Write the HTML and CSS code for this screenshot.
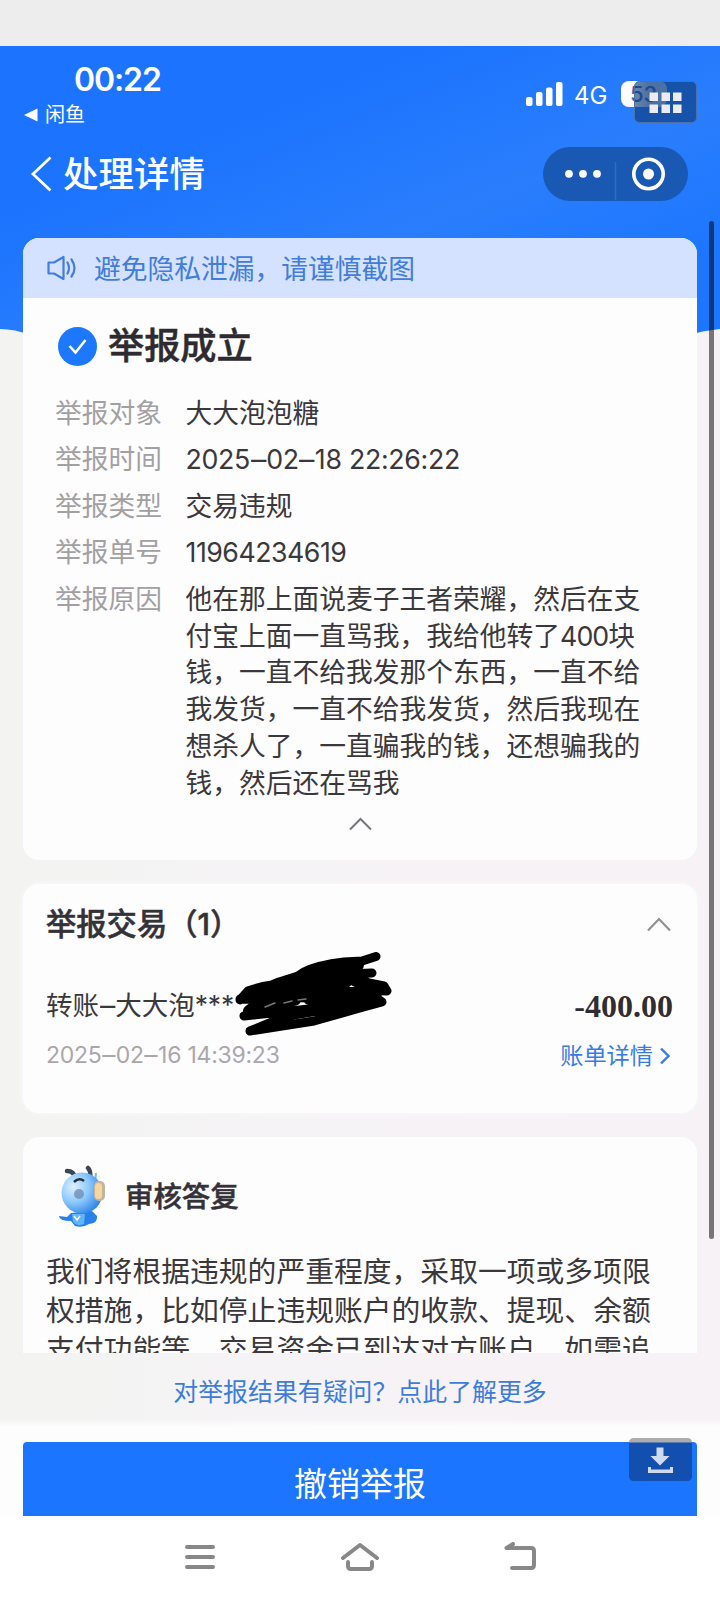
FILE: index.html
```
<!DOCTYPE html>
<html lang="zh-CN">
<head>
<meta charset="utf-8">
<title>处理详情</title>
<link rel="stylesheet" href="styles.css">
</head>
<body>
<div class="phone">
  <div class="strip"></div>
  <main class="screen">
    <svg class="backdrop" width="720" height="290" viewBox="0 0 720 290"><defs><linearGradient id="sky" x1="0" y1="0" x2="1" y2="1"><stop offset="0.3" stop-color="#1c74fe"/><stop offset="0.6" stop-color="#2a7efd"/><stop offset="0.85" stop-color="#1c76ff"/></linearGradient></defs><path d="M0 0H720V283Q700 285 690 289H30Q15 283 0 283Z" fill="url(#sky)"/></svg>
    <header class="top">
      <div class="status">
        <div class="left">
          <div class="time">00:22</div>
          <div class="return"><svg width="14" height="14" viewBox="0 0 14 14"><path d="M0 7L13.5 0.5V13.5Z" fill="#fff"/></svg><span>闲鱼</span></div>
        </div>
        <svg class="signal" width="37" height="24" viewBox="0 0 37 24" fill="#fff"><rect y="15" width="6.5" height="9" rx="2"/><rect x="10" y="10" width="6.5" height="14" rx="2"/><rect x="20" y="5.500" width="6.500" height="18.500" rx="2"/><rect x="30" y="0" width="6.500" height="24" rx="2"/></svg>
        <span class="net">4G</span>
        <div class="battery"><span>53</span></div>
      </div>
      <div class="nav">
        <svg class="back" width="22" height="36" viewBox="0 0 22 36"><path d="M20.500 1.500L3 18L20.500 34.500" fill="none" stroke="#fff" stroke-width="2.800"/></svg>
        <h1>处理详情</h1>
        <svg class="capsule" width="145" height="54" viewBox="0 0 145 54"><rect width="145" height="54" rx="27" fill="#1959b3"/><path d="M72.500 15V53" stroke="#2d6cc7" stroke-width="1.500"/><g fill="#fff"><circle cx="26" cy="26.800" r="3.900"/><circle cx="40" cy="26.800" r="3.900"/><circle cx="54" cy="26.800" r="3.900"/><circle cx="105.500" cy="27" r="5.500"/></g><circle cx="105.500" cy="27" r="14.700" fill="none" stroke="#fff" stroke-width="3.600"/></svg>
      </div>
    </header>

    <section class="card report">
      <div class="notice">
        <svg width="30" height="26" viewBox="0 0 30 26" fill="none" stroke="#3f7de0" stroke-width="2.200" stroke-linejoin="round" stroke-linecap="round"><path d="M1.500 7.500H7L16.500 2V24L7 18.500H1.500Z"/><path d="M20.500 7.500Q23.500 13 20.500 18.500M24.500 4.500Q30.500 13 24.500 21.500"/></svg>
        <span>避免隐私泄漏，请谨慎截图</span>
      </div>
      <div class="result">
        <svg width="39" height="39" viewBox="0 0 39 39"><circle cx="19.500" cy="19.500" r="19.500" fill="#1c79fd"/><path d="M11.500 19L17.500 25.500L27.500 13" fill="none" stroke="#fff" stroke-width="2.500"/></svg>
        <h2>举报成立</h2>
      </div>
      <dl class="facts">
        <dt>举报对象</dt><dd>大大泡泡糖</dd>
        <dt>举报时间</dt><dd class="when">2025<i>–</i>02<i>–</i>18 22:26:22</dd>
        <dt>举报类型</dt><dd>交易违规</dd>
        <dt>举报单号</dt><dd class="serial">11964234619</dd>
        <dt>举报原因</dt><dd>他在那上面说麦子王者荣耀，然后在支<br>付宝上面一直骂我，我给他转了<span class="sum">400</span>块<br>钱，一直不给我发那个东西，一直不给<br>我发货，一直不给我发货，然后我现在<br>想杀人了，一直骗我的钱，还想骗我的<br>钱，然后还在骂我</dd>
      </dl>
      <svg class="fold" width="24" height="14" viewBox="0 0 24 14"><path d="M2 12.500L12.500 2L23 12.500" fill="none" stroke="#777579" stroke-width="2"/></svg>
    </section>

    <section class="card trade">
      <div class="trade-head">
        <h3>举报交易（1）</h3>
        <svg width="26" height="15" viewBox="0 0 26 15"><path d="M2 13.500L13 2L24 13.500" fill="none" stroke="#929094" stroke-width="2.200"/></svg>
      </div>
      <div class="trade-row">
        <span class="payee">转账<i>–</i>大大泡<span class="mask">***</span></span><span class="amount">-400.00</span>
        <svg class="scribble" width="160" height="88" viewBox="0 -1 160 88" fill="none" stroke="#000" stroke-width="9" stroke-linecap="round" stroke-linejoin="round"><path d="M6 47L14 38Q24 34 38 32L45 29L64 23L70 19Q84 12 110 9L128 8L142 3.500M138 20L113 21L135 30L150 33L153 38L131 37L148 49L126 55L80 68L16 78L45 66L84 55L10 63L26 57L62 48L6 46"/><path d="M14 43L42 34L70 25L112 13L124 12L110 22L132 33L145 37L126 48L85 58L90 44L60 43L23 52L15 58M48 36L112 29L72 36L136 41L75 46M80 23L112 18M25 45L75 37M88 50L120 44M44 63L124 50" stroke-width="12"/><path d="M31 54L41 50M50 50L58 48M64 47L72 46" stroke="#77747a" stroke-width="1.500"/></svg>
      </div>
      <div class="trade-foot"><span class="date">2025<i>–</i>02<i>–</i>16 14:39:23</span><span class="bill">账单详情<svg width="12" height="18" viewBox="0 0 12 18"><path d="M2 1.500L9.500 9L2 16.500" fill="none" stroke="#377ce6" stroke-width="2.400"/></svg></span></div>
    </section>

    <section class="card reply">
      <div class="reply-head">
        <svg width="50" height="64" viewBox="0 0 50 64"><defs><radialGradient id="face" cx=".3" cy=".35" r=".75"><stop offset="0" stop-color="#dcf0ff"/><stop offset=".5" stop-color="#8ccafc"/><stop offset="1" stop-color="#2c81e8"/></radialGradient></defs><path d="M38 18L39 8" stroke="#75b7f3" stroke-width="2"/><path d="M18 13Q17 6 10 6M33 13Q34 6 31 3" fill="none" stroke="#3b4655" stroke-width="4.500" stroke-linecap="round"/><path d="M14 48L10 52L2 51Q2 56 14 56L18 61Q26 63 32 59Q41 58 40 51L35 46Z" fill="#2781e8"/><path d="M15 49H28L27 59Q20 62 16 57Z" fill="#61b5fb"/><circle cx="25" cy="28" r="20.500" fill="url(#face)"/><rect x="37" y="16" width="11" height="20" rx="5" fill="#c0b5a3"/><rect x="38" y="18" width="7" height="16" rx="3.500" fill="#f9d59b"/><path d="M17 17Q22 12 27 16" fill="none" stroke="#202e45" stroke-width="2.500"/><circle cx="22" cy="29" r="5" fill="#718fb5" opacity=".8"/><path d="M17 51L20 55L23 51" fill="none" stroke="#fff" stroke-width="1.500"/></svg>
        <h3>审核答复</h3>
      </div>
      <p>我们将根据违规的严重程度，采取一项或多项限<br>权措施，比如停止违规账户的收款、提现、余额<br>支付功能等，交易资金已到达对方账户，如需追</p>
    </section>
    <div class="more">对举报结果有疑问？点此了解更多</div>
    <footer class="action"><div class="revoke">撤销举报</div></footer>
  </main>
  <nav class="system">
    <svg width="30" height="26" viewBox="0 0 30 26" stroke="#888" stroke-width="4" stroke-linecap="round"><path d="M2 3H28M2 13H28M2 23H28"/></svg>
    <svg width="38" height="30" viewBox="0 0 38 30" fill="none" stroke="#888" stroke-width="4" stroke-linecap="round" stroke-linejoin="round"><path d="M2 16L19 3L36 16M7 20V24Q7 27 10 27H28Q31 27 31 24V20"/></svg>
    <svg width="32" height="29" viewBox="0 0 32 29" fill="none" stroke="#888" stroke-width="4" stroke-linecap="round" stroke-linejoin="round"><path d="M9 2L2.500 6H27Q30 6 30 9V23Q30 26 27 26H8"/></svg>
  </nav>
  <svg class="grid-button" width="63" height="42" viewBox="0 0 63 42"><rect x=".5" y=".5" width="62" height="41" rx="5" fill="#0c3878" fill-opacity=".62" stroke="#4a72a8"/><path d="M15.500 11.500h8.500v8.500h-8.500zM27.500 11.500h8.500v8.500h-8.500zM39 11.500h8.500v8.500H39zM15.500 23.500h8.500v8.500h-8.500zM27.500 23.500h8.500v8.500h-8.500zM39 23.500h8.500v8.500H39z" fill="#ebebf1"/></svg>
  <svg class="save-button" width="63" height="43" viewBox="0 0 63 43"><path d="M0 4H63V38Q63 43 58 43H5Q0 43 0 38Z" fill="#134fae"/><path d="M0 4.500Q0 0 5 0H58Q63 0 63 4.500Z" fill="#aaacae"/><path d="M27.500 9.500H34.500V18H40.500L31 27.500L21.500 18H27.500ZM19 29H22V31.500H41V29H44V35H19Z" fill="#d0daed"/></svg>
  <div class="scrollbar"></div>
</div>
</body>
</html>
```
FILE: styles.css
```
* { box-sizing: border-box; }
body { margin: 0; font-family: Inter, "Noto Sans CJK SC", sans-serif; color: #3b383c; }
h1, h2, h3, p, dl, dd { margin: 0; }
svg { display: block; flex: none; }
i { font-style: normal; display: inline-block; transform: scaleX(1.15); margin: 0 1.500px; }
.phone { position: relative; width: 720px; height: 1600px; overflow: hidden; background: #fff; display: flex; flex-direction: column; white-space: nowrap; }
.strip { height: 46px; background: #ededed; flex: none; }
.screen { position: relative; height: 1470px; flex: none; overflow: hidden; display: flex; flex-direction: column; background: linear-gradient(90deg, #f3f3f1, #f6f3f7 45%, #f6f2f6); }
.backdrop { position: absolute; top: 0; left: 0; }
.top { position: relative; height: 192px; flex: none; color: #fff; }
.status { height: 96px; display: flex; align-items: flex-start; padding-left: 24px; }
.left { width: 502px; padding-top: 16px; }
.time { padding-left: 50px; font-size: 32px; line-height: 36px; font-weight: 600; letter-spacing: -1.100px; }
.return { display: flex; align-items: center; gap: 7px; font-size: 20px; line-height: 24px; margin-top: 5px; }
.signal { margin-top: 36px; }
.net { margin: 37px 0 0 11px; font-size: 24px; line-height: 26px; width: 47px; }
.battery { margin-top: 35px; width: 46px; height: 26px; border-radius: 8px; background: linear-gradient(90deg, #fff 32%, #b9cee9 60%); color: #3866ad; font-size: 22px; line-height: 26px; padding-left: 9px; font-weight: 500; }
.nav { display: flex; align-items: center; height: 64px; padding: 0 32px 0 30px; }
.nav h1 { font-size: 35.500px; line-height: 44px; font-weight: 500; margin-left: 11px; padding-top: 1px; flex: 1; }
.card { position: relative; margin: 0 23px; background: #fefdfe; flex: none; border-radius: 16px; box-shadow: 0 0 5px #fdfbfc; }
.report { height: 622px; overflow: hidden; box-shadow: none; }
.notice { height: 60px; background: #d4e2ff; display: flex; align-items: center; padding: 0 0 2px 24px; gap: 17px; color: #417ddb; font-size: 26.750px; }
.notice svg { margin-top: 2px; }
.result { display: flex; align-items: center; height: 96px; padding-left: 35px; gap: 11px; }
.result h2 { font-size: 36.200px; line-height: 44px; font-weight: 500; color: #2d2b30; -webkit-text-stroke: .5px #2d2b30; }
.facts { display: grid; grid-template-columns: 130.500px 1fr; row-gap: 9.600px; padding: 1px 0 0 32px; font-size: 26.750px; line-height: 36.850px; }
.facts dt { color: #a2a0a3; }
.when { letter-spacing: -.3px; }
.serial { letter-spacing: -.5px; }
.sum { letter-spacing: -.9px; }
.fold { margin: 15px auto 0; }
.trade { height: 229px; margin-top: 24px; padding: 19px 23px 0; }
.trade-head { display: flex; height: 42px; align-items: center; justify-content: space-between; padding-right: 2px; }
h3 { font-size: 30.300px; line-height: 42px; font-weight: 500; color: #343137; -webkit-text-stroke: .5px #343137; }
.trade-row { position: relative; display: flex; height: 42px; margin-top: 39px; align-items: center; justify-content: space-between; }
.payee { font-size: 26.500px; padding-bottom: 3px; }
.mask { letter-spacing: -.2px; }
.amount { font: bold 32px "Liberation Serif", serif; color: #302d32; padding: 2px 1px 0 0; }
.scribble { position: absolute; left: 188px; top: -32px; }
.trade-foot { display: flex; height: 30px; margin-top: 14px; align-items: center; justify-content: space-between; }
.date { color: #aaa7ab; font-size: 23px; letter-spacing: -.25px; }
.bill { display: flex; align-items: center; gap: 6px; color: #377ce6; font-size: 23.200px; padding: 0 3px 2px 0; }
.bill svg { margin-top: 3px; }
.reply { height: 216px; margin-top: 24px; padding: 28px 23px 0; overflow: hidden; border-radius: 16px 16px 0 0; box-shadow: none; }
.reply-head { display: flex; align-items: center; gap: 18px; padding-left: 11px; height: 64px; }
.reply-head h3 { font-size: 28.400px; }
.reply p { font-size: 28.800px; line-height: 39px; margin-top: 23px; }
.more { height: 66px; flex: none; padding-top: 21px; line-height: 36px; text-align: center; font-size: 24.900px; color: #3d7cdc; }
.action { flex: 1; padding: 23px 23px 0; background: linear-gradient(#fff0, #fefdfe 8px); }
.revoke { height: 74px; border-radius: 4px 4px 0 0; background: #1b75ff; color: #fff; font-size: 33px; line-height: 84px; text-align: center; }
.system { height: 84px; flex: none; background: #fff; display: flex; align-items: center; padding: 0 184px 3px 185px; justify-content: space-between; }
.grid-button { position: absolute; left: 634px; top: 81px; }
.save-button { position: absolute; left: 629px; top: 1438px; }
.scrollbar { position: absolute; left: 708.500px; top: 221px; width: 5.500px; height: 1018px; border-radius: 3px; background: rgba(0, 0, 0, .52); }
```
